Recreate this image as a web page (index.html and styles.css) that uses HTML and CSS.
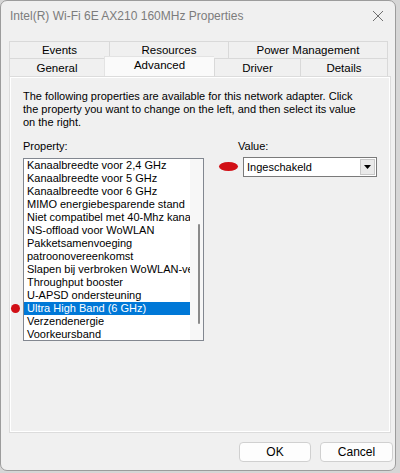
FILE: index.html
```html
<!DOCTYPE html>
<html lang="en">
<head>
  <meta charset="UTF-8" />
  <title>Intel(R) Wi-Fi 6E AX210 160MHz Properties</title>
  <link rel="stylesheet" href="styles.css">
</head>
<body>
  <div class="window">
    <div class="titlebar">
      <span class="title">Intel(R) Wi-Fi 6E AX210 160MHz Properties</span>
      <svg class="close" width="12" height="12" viewBox="0 0 12 12">
        <path d="M1 1 L11 11 M11 1 L1 11" stroke="#6f6f6f" stroke-width="1" fill="none"/>
      </svg>
    </div>

    <div class="tabs">
      <div class="tab-row back">
        <div class="tab">Events</div>
        <div class="tab">Resources</div>
        <div class="tab">Power Management</div>
      </div>
      <div class="tab-row front">
        <div class="tab">General</div>
        <div class="tab active">Advanced</div>
        <div class="tab">Driver</div>
        <div class="tab">Details</div>
      </div>
    </div>

    <div class="panel">
      <p class="intro">The following properties are available for this network adapter. Click the property you want to change on the left, and then select its value on the right.</p>
      <div class="fields">
        <div class="field">
          <div class="label">Property:</div>
          <div class="listbox">
            <ul class="items">
              <li>Kanaalbreedte voor 2,4 GHz</li>
              <li>Kanaalbreedte voor 5 GHz</li>
              <li>Kanaalbreedte voor 6 GHz</li>
              <li>MIMO energiebesparende stand</li>
              <li>Niet compatibel met 40-Mhz kanaal</li>
              <li>NS-offload voor WoWLAN</li>
              <li>Pakketsamenvoeging</li>
              <li>patroonovereenkomst</li>
              <li>Slapen bij verbroken WoWLAN-verbinding</li>
              <li>Throughput booster</li>
              <li>U-APSD ondersteuning</li>
              <li class="selected">Ultra High Band (6 GHz)</li>
              <li>Verzendenergie</li>
              <li>Voorkeursband</li>
            </ul>
            <div class="scrollbar"><span class="thumb"></span></div>
            <span class="mark dot"></span>
          </div>
        </div>
        <div class="field value">
          <div class="label">Value:</div>
          <div class="select">
            <span class="select-text">Ingeschakeld</span>
            <span class="select-btn">
              <svg width="7" height="4" viewBox="0 0 7 4"><path d="M0 0 H7 L3.5 4 Z" fill="#000"/></svg>
            </span>
            <span class="mark dash"></span>
          </div>
        </div>
      </div>
    </div>

    <div class="footer">
      <button class="btn">OK</button>
      <button class="btn">Cancel</button>
    </div>
  </div>
</body>
</html>
```

FILE: styles.css
```css
body {
  margin: 0;
  background: #d6d6d6;
  font-family: 'Liberation Sans', Arial, sans-serif;
  font-size: 11px;
  color: #000;
}
.window {
  box-sizing: border-box;
  width: 396px;
  height: 471px;
  background: #f0f0f0;
  border: 1px solid #9c9c9c;
  border-radius: 7px;
  display: flex;
  flex-direction: column;
  overflow: hidden;
}
.titlebar {
  height: 30px;
  display: flex;
  align-items: center;
  justify-content: space-between;
  padding: 0 10px 0 9px;
}
.title {
  font-size: 12px;
  color: #7c7c7c;
}
.close {
  margin-right: 1px;
}
.tabs {
  margin: 10px 0 0 8px;
  width: 379px;
}
.tab-row {
  display: grid;
  height: 17px;
}
.tab-row.back {
  grid-template-columns: 100px 119px 160px;
}
.tab-row.front {
  grid-template-columns: 95px 110px 86px 88px;
  height: 18px;
}
.tab {
  display: flex;
  align-items: center;
  justify-content: center;
  border: 1px solid #d9d9d9;
  border-right: none;
  border-bottom: none;
  background: #f0f0f0;
  font-size: 11.5px;
}
.tab:last-child {
  border-right: 1px solid #d9d9d9;
}
.tab.active {
  background: #fafafa;
  margin-top: -2px;
  padding-bottom: 3px;
  border-color: #e3e3e3;
  position: relative;
  z-index: 1;
}
.panel {
  box-sizing: border-box;
  margin-left: 8px;
  width: 382px;
  height: 357px;
  border: 1px solid #dcdcdc;
  box-shadow: inset 1px 1px 0 #fff, inset -1px -1px 0 #fff;
  padding: 13px 12px 0 13px;
}
.intro {
  margin: 0;
  line-height: 13px;
  width: 346px;
}
.fields {
  display: grid;
  grid-template-columns: 181px 1fr;
  column-gap: 34px;
  margin-top: 11px;
}
.label {
  line-height: 13px;
  margin-bottom: 5px;
}
.listbox {
  position: relative;
  box-sizing: border-box;
  height: 183px;
  background: #fff;
  border: 1px solid #828790;
  display: flex;
}
.items {
  list-style: none;
  margin: 0;
  padding: 0;
  width: 166px;
  overflow: hidden;
}
.items li {
  height: 13px;
  line-height: 13px;
  padding-left: 3px;
  white-space: nowrap;
  overflow: hidden;
}
.items li.selected {
  background: #0078d7;
  color: #fff;
}
.scrollbar {
  flex: 1;
  background: #f7f7f7;
  position: relative;
}
.thumb {
  position: absolute;
  left: 8px;
  top: 65px;
  width: 2px;
  height: 100px;
  background: #8a8a8a;
  border-radius: 1px;
}
.value .label {
  margin-bottom: 4px;
}
.select {
  position: relative;
  box-sizing: border-box;
  margin-left: 5px;
  width: 134px;
  height: 20px;
  background: #fff;
  border: 1px solid #7a7a7a;
  display: flex;
  align-items: center;
  padding: 1px;
}
.select-text {
  flex: 1;
  padding-left: 2px;
}
.select-btn {
  box-sizing: border-box;
  width: 15px;
  height: 16px;
  background: #e9e9e9;
  border: 1px solid #c8c8c8;
  display: flex;
  align-items: center;
  justify-content: center;
}
.mark {
  position: absolute;
  background: #d10f16;
  border-radius: 50%;
}
.dot {
  left: -13px;
  top: 145px;
  width: 9px;
  height: 9px;
}
.dash {
  left: -25px;
  top: 4px;
  width: 19px;
  height: 9px;
}
.footer {
  display: flex;
  justify-content: flex-end;
  gap: 9px;
  padding: 9px 2px 0 0;
}
.btn {
  box-sizing: border-box;
  width: 72px;
  height: 20px;
  font-family: 'Liberation Sans', Arial, sans-serif;
  font-size: 12px;
  background: #fdfdfd;
  border: 1px solid #d0d0d0;
  border-radius: 4px;
  color: #000;
  padding: 0;
}
.btn + .btn {
  width: 73px;
}
```
